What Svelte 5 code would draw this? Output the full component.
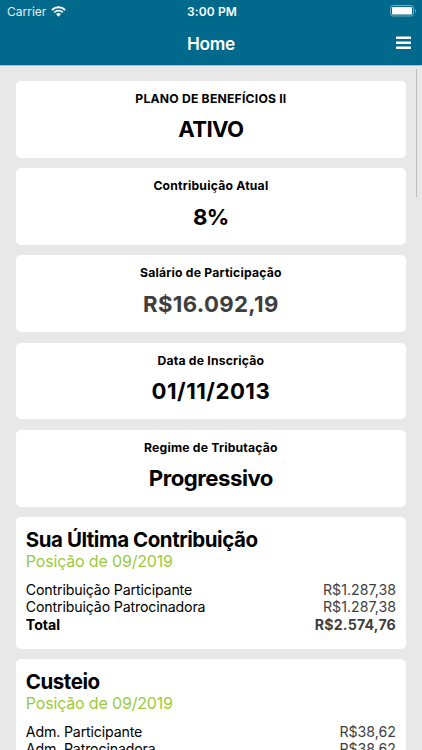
<script>
  const stats = [
    { id: 'plan', label: 'PLANO DE BENEFÍCIOS II', value: 'ATIVO' },
    { id: 'rate', label: 'Contribuição Atual', value: '8%' },
    { id: 'salary', label: 'Salário de Participação', value: 'R$16.092,19' },
    { id: 'date', label: 'Data de Inscrição', value: '01/11/2013' },
    { id: 'tax', label: 'Regime de Tributação', value: 'Progressivo' },
  ];
  const statements = [
    {
      title: 'Sua Última Contribuição',
      rows: [
        { name: 'Contribuição Participante', amount: 'R$1.287,38' },
        { name: 'Contribuição Patrocinadora', amount: 'R$1.287,38' },
        { name: 'Total', amount: 'R$2.574,76', total: true },
      ],
    },
    {
      title: 'Custeio',
      rows: [
        { name: 'Adm. Participante', amount: 'R$38,62' },
        { name: 'Adm. Patrocinadora', amount: 'R$38,62' },
      ],
    },
  ];
</script>

<div class="screen">
  <header>
    <div class="status">
      <div class="carrier">
        <span>Carrier</span>
        <svg width="15" height="11" viewBox="0 0 15 11" fill="none" stroke="#fff" stroke-width="1.9">
          <path d="M.9 4a9.4 9.4 0 0 1 13.2 0M3.2 6.4a6.2 6.2 0 0 1 8.6 0" />
          <path d="M7.5 10.7 5.1 8.3a3.4 3.4 0 0 1 4.8 0z" fill="#fff" stroke="none" />
        </svg>
      </div>
      <span class="clock">3:00 PM</span>
      <svg class="battery" width="27" height="12" viewBox="0 0 27 12">
        <rect x=".5" y=".5" width="23" height="10.5" rx="2.8" fill="none" stroke="#fff" stroke-opacity=".45" />
        <rect x="2" y="2" width="20" height="7.5" rx="1.3" fill="#fff" />
        <path d="M25 4v3.6c1.6-.5 1.6-3.1 0-3.6z" fill="#fff" fill-opacity=".45" />
      </svg>
    </div>
    <div class="bar">
      <h1>Home</h1>
      <button aria-label="Menu">
        <svg width="15" height="14" viewBox="0 0 15 14" fill="#fff">
          <rect y=".4" width="15" height="2.5" rx=".3" />
          <rect y="5.5" width="15" height="2.5" rx=".3" />
          <rect y="10.6" width="15" height="2.5" rx=".3" />
        </svg>
      </button>
    </div>
  </header>

  <main>
    {#each stats as s}
      <section class="card stat {s.id}">
        <h2>{s.label}</h2>
        <p>{s.value}</p>
      </section>
    {/each}
    {#each statements as st}
      <section class="card statement">
        <h3>{st.title}</h3>
        <p class="position">Posição de 09/2019</p>
        <dl>
          {#each st.rows as row}
            <div class:total={row.total}>
              <dt>{row.name}</dt>
              <dd>{row.amount}</dd>
            </div>
          {/each}
        </dl>
      </section>
    {/each}
  </main>
  <div class="scrollbar"></div>
</div>

<style>
  :global(body) { background: #e8e8e8; overflow: hidden; }
  .screen { position: relative; height: 750px; overflow: hidden;
    display: flex; flex-direction: column;
    background: #e8e8e8; color: #000;
    font-family: Inter, "Liberation Sans", sans-serif; }
  h1, h2, h3, p, dl, dd { margin: 0; }

  header { flex: none; height: 65px; background: #00698c; color: #fff;
    border-bottom: 1px solid #9dc3d1; }
  .status { display: grid; grid-template-columns: 1fr auto 1fr;
    align-items: center; height: 22px; padding: 0 5px 0 7px; }
  .carrier { display: flex; align-items: center; gap: 5px;
    font-size: 12px; color: #e3eff3; }
  .clock { font-size: 12px; font-weight: 600; letter-spacing: 0.15px; }
  .battery { justify-self: end; }
  .bar { display: grid; grid-template-columns: 1fr auto 1fr;
    align-items: center; height: 42px; padding: 0 11px; }
  h1 { grid-column: 2; font-size: 17.3px; font-weight: 600; letter-spacing: -0.3px; }
  button { justify-self: end; display: block; padding: 0; border: 0;
    background: none; line-height: 0; }

  main { flex: 1; min-height: 0; overflow: hidden;
    display: flex; flex-direction: column; gap: 10.4px;
    padding: 15px 15.8px 0 15.6px; }
  .card { flex: none; box-sizing: border-box; background: #fff; border-radius: 5px; }
  .stat { height: 76.8px; padding-top: 10px; text-align: center; }
  .stat h2 { font-size: 12.2px; line-height: 16px; font-weight: 650; letter-spacing: 0.2px; }
  .stat p { margin-top: 8.4px; font-size: 22.2px; line-height: 28px; font-weight: 680; }
  .plan p, .rate p { letter-spacing: -0.6px; }
  .salary p { color: #3e3e3e; letter-spacing: 0.35px; }
  .date p { letter-spacing: 0.5px; }
  .tax p { letter-spacing: -0.5px; }

  .statement { height: 131.6px; padding: 10px 10.2px 0; }
  h3 { font-size: 20.5px; line-height: 25px; font-weight: 700; letter-spacing: -0.46px; }
  .position { margin-top: -1px; font-size: 16px; line-height: 20px;
    letter-spacing: -0.17px; color: #9aca3c; }
  dl { margin-top: 10px; font-size: 14.2px; line-height: 17.3px; }
  dl div { display: flex; justify-content: space-between; }
  dt { letter-spacing: -0.16px; }
  dd { color: #3e3e3e; }
  .total { font-weight: 700; }
  .total dt { letter-spacing: 0; }
  .total dd { letter-spacing: 0.18px; }

  .scrollbar { position: absolute; top: 69px; right: 5px;
    width: 1px; height: 128px; background: #bcbcbc; }
</style>
